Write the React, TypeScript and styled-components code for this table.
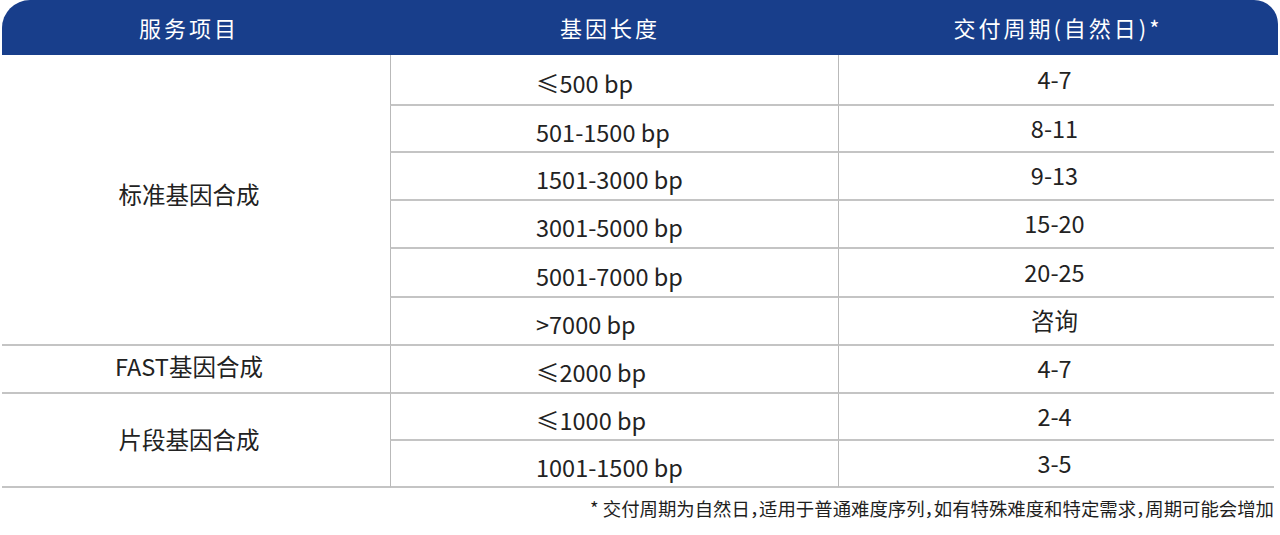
import { Fragment } from "react";
import styled, { createGlobalStyle } from "styled-components";

const GlobalStyle = createGlobalStyle`
    body {
        margin: 0;
        background: #ffffff;
        font-family: "Noto Sans CJK SC", "Noto Sans", sans-serif;
        color: #222222;
    }
`;

const Page = styled.div`
    width: 1280px;
    height: 535px;
    padding: 0 2px 0 2px;
    box-sizing: border-box;
`;

const HeaderBar = styled.div`
    display: grid;
    grid-template-columns: 388px 448px 1fr;
    height: 55px;
    background: #183e8b;
    border-radius: 28px 24px 0 0;
    color: #ffffff;
`;

const HeaderCell = styled.div<{ $shift?: number }>`
    display: flex;
    align-items: center;
    justify-content: center;
    font-size: 22px;
    letter-spacing: 3px;
    padding-bottom: 2px;
    padding-right: ${(p) => p.$shift ?? 0}px;
`;

const Body = styled.div`
    display: grid;
    grid-template-columns: 388px 448px 436px;
    grid-template-rows: 51px 47px 48px 48px 49px 48px 48px 47px 47px;
    font-size: 23.5px;
`;

const GroupCell = styled.div<{ $span: number; $lift: number }>`
    grid-column: 1;
    grid-row: span ${(p) => p.$span};
    display: flex;
    align-items: center;
    justify-content: center;
    padding-right: 14px;
    padding-bottom: ${(p) => p.$lift}px;
    border-bottom: 2px solid #c4c4c4;
`;

const LengthCell = styled.div`
    grid-column: 2;
    display: flex;
    align-items: center;
    padding: 6px 0 0 145px;
    border-left: 1px solid #b9b9b9;
    border-bottom: 2px solid #c4c4c4;
`;

const DaysCell = styled.div`
    grid-column: 3;
    display: flex;
    align-items: center;
    justify-content: center;
    padding: 0 4px 2px 0;
    border-left: 1px solid #b9b9b9;
    border-bottom: 2px solid #c4c4c4;
`;

const Footnote = styled.div`
    text-align: right;
    font-size: 18.4px;
    font-feature-settings: "halt";
    padding: 7px 4px 0 0;
    color: #1e1e1e;
`;

type Group = {
    name: string;
    lift: number;
    rows: { length: string; days: string }[];
};

const groups: Group[] = [
    {
        name: "标准基因合成",
        lift: 12,
        rows: [
            { length: "≤500 bp", days: "4-7" },
            { length: "501-1500 bp", days: "8-11" },
            { length: "1501-3000 bp", days: "9-13" },
            { length: "3001-5000 bp", days: "15-20" },
            { length: "5001-7000 bp", days: "20-25" },
            { length: ">7000 bp", days: "咨询" },
        ],
    },
    {
        name: "FAST基因合成",
        lift: 6,
        rows: [{ length: "≤2000 bp", days: "4-7" }],
    },
    {
        name: "片段基因合成",
        lift: 3,
        rows: [
            { length: "≤1000 bp", days: "2-4" },
            { length: "1001-1500 bp", days: "3-5" },
        ],
    },
];

const App = () => {
    return (
        <Page>
            <GlobalStyle />
            <HeaderBar>
                <HeaderCell $shift={14}>服务项目</HeaderCell>
                <HeaderCell $shift={8}>基因长度</HeaderCell>
                <HeaderCell>交付周期(自然日)*</HeaderCell>
            </HeaderBar>
            <Body>
                {groups.map((group) => (
                    <Fragment key={group.name}>
                        <GroupCell $span={group.rows.length} $lift={group.lift}>
                            {group.name}
                        </GroupCell>
                        {group.rows.map((row) => (
                            <Fragment key={row.length}>
                                <LengthCell>{row.length}</LengthCell>
                                <DaysCell>{row.days}</DaysCell>
                            </Fragment>
                        ))}
                    </Fragment>
                ))}
            </Body>
            <Footnote>
                * 交付周期为自然日，适用于普通难度序列，如有特殊难度和特定需求，周期可能会增加
            </Footnote>
        </Page>
    );
};

export default App;
